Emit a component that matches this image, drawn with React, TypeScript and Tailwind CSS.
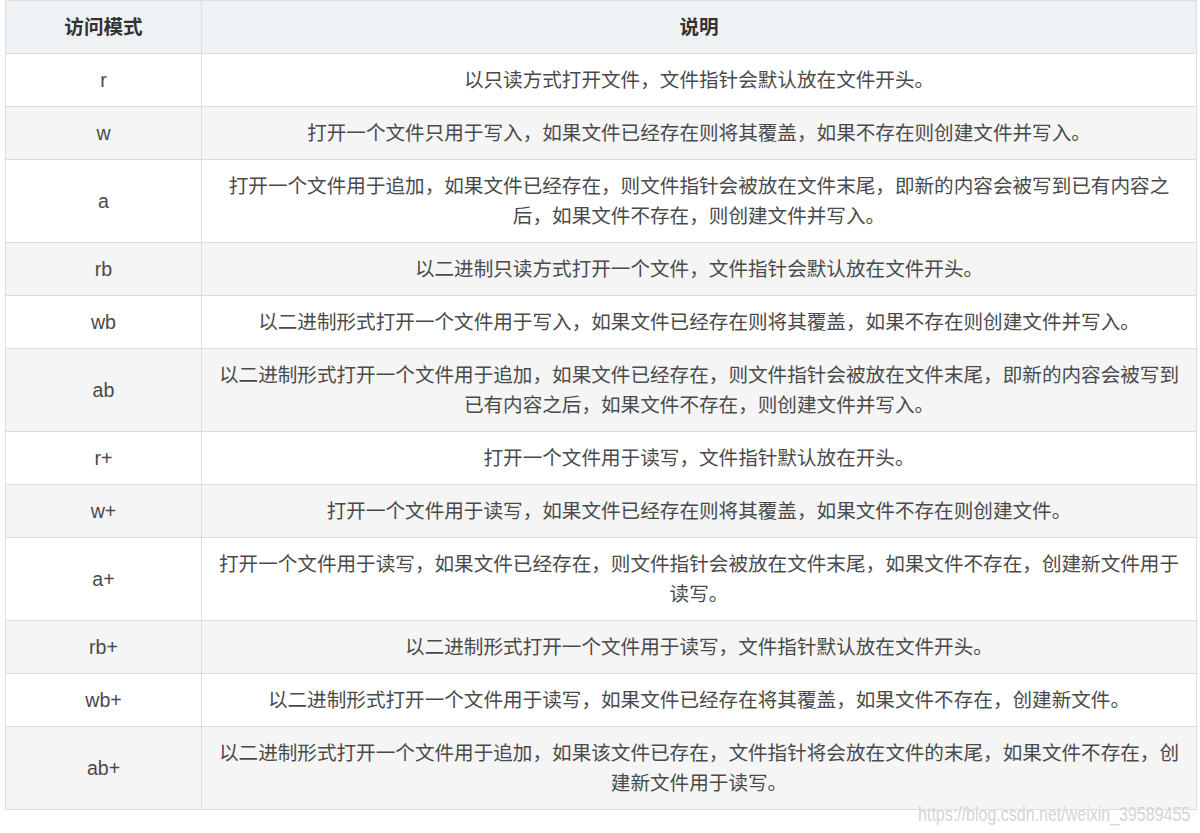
import React from 'react';

type Mode = { mode: string; desc: string };

const modes: Mode[] = [
  { mode: 'r', desc: '以只读方式打开文件，文件指针会默认放在文件开头。' },
  { mode: 'w', desc: '打开一个文件只用于写入，如果文件已经存在则将其覆盖，如果不存在则创建文件并写入。' },
  { mode: 'a', desc: '打开一个文件用于追加，如果文件已经存在，则文件指针会被放在文件末尾，即新的内容会被写到已有内容之后，如果文件不存在，则创建文件并写入。' },
  { mode: 'rb', desc: '以二进制只读方式打开一个文件，文件指针会默认放在文件开头。' },
  { mode: 'wb', desc: '以二进制形式打开一个文件用于写入，如果文件已经存在则将其覆盖，如果不存在则创建文件并写入。' },
  { mode: 'ab', desc: '以二进制形式打开一个文件用于追加，如果文件已经存在，则文件指针会被放在文件末尾，即新的内容会被写到已有内容之后，如果文件不存在，则创建文件并写入。' },
  { mode: 'r+', desc: '打开一个文件用于读写，文件指针默认放在开头。' },
  { mode: 'w+', desc: '打开一个文件用于读写，如果文件已经存在则将其覆盖，如果文件不存在则创建文件。' },
  { mode: 'a+', desc: '打开一个文件用于读写，如果文件已经存在，则文件指针会被放在文件末尾，如果文件不存在，创建新文件用于读写。' },
  { mode: 'rb+', desc: '以二进制形式打开一个文件用于读写，文件指针默认放在文件开头。' },
  { mode: 'wb+', desc: '以二进制形式打开一个文件用于读写，如果文件已经存在将其覆盖，如果文件不存在，创建新文件。' },
  { mode: 'ab+', desc: '以二进制形式打开一个文件用于追加，如果该文件已存在，文件指针将会放在文件的末尾，如果文件不存在，创建新文件用于读写。' },
];

const App: React.FC = () => {
  return (
    <div className="relative h-[833px] w-[1200px] bg-white font-['Liberation_Sans','Noto_Sans_CJK_SC',sans-serif]">
      <table className="ml-[5px] w-[1192px] table-fixed border-collapse text-[19.6px] leading-[30px] text-[#4a4a4a]">
        <thead>
          <tr className="bg-[#eff2f5]">
            <th className="w-[196px] border border-[#dddddd] py-[11px] text-center font-bold text-[#333]">访问模式</th>
            <th className="border border-[#dddddd] py-[11px] text-center font-bold text-[#333]">说明</th>
          </tr>
        </thead>
        <tbody>
          {modes.map((m, i) => (
            <tr key={m.mode} className={i % 2 === 1 ? 'bg-[#f5f5f5]' : 'bg-white'}>
              <td className="border border-[#dddddd] py-[11px] text-center">{m.mode}</td>
              <td className="border border-[#dddddd] px-[14px] py-[11px] text-center">{m.desc}</td>
            </tr>
          ))}
        </tbody>
      </table>
      <div className="absolute right-[10px] top-[802px] origin-right scale-x-[0.8] text-[20px] leading-[24px] text-[#d4d4d4] [text-shadow:0_0_1px_#ffffff]">
        https://blog.csdn.net/weixin_39589455
      </div>
    </div>
  );
};

export default App;
